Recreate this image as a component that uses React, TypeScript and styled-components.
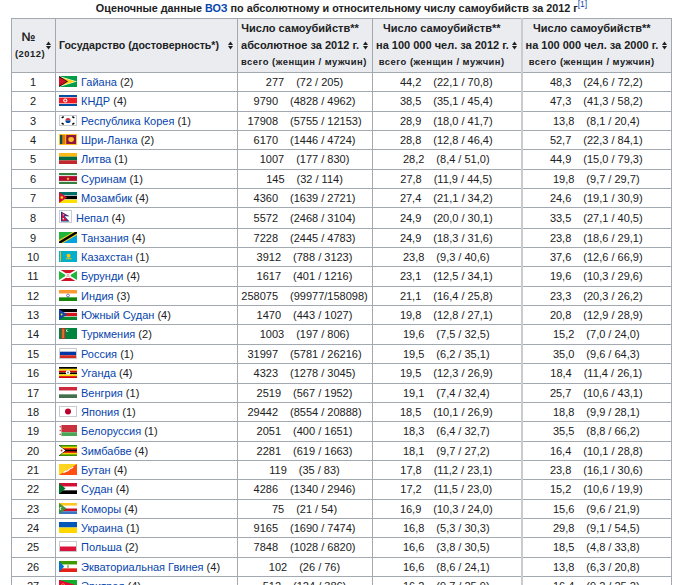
import React from "react";
import styled, { createGlobalStyle } from "styled-components";

const GlobalStyle = createGlobalStyle`
  html, body {
    margin: 0;
    overflow: hidden;
    background: #fff;
  }
  body {
    color: #202122;
    font-family: "Liberation Sans", Arial, sans-serif;
  }
`;

const W = 18;
const H = 11;

// simple flag drawings in an 18x11 box
const flags: Record<string, React.ReactNode> = {
  guyana: (
    <>
      <rect width={W} height={H} fill="#009e49" />
      <polygon points="0,0 18,5.5 0,11" fill="#fff" />
      <polygon points="0,0.7 16.6,5.5 0,10.3" fill="#fcd116" />
      <polygon points="0,0 9,5.5 0,11" fill="#000" />
      <polygon points="0,0.9 8,5.5 0,10.1" fill="#ce1126" />
    </>
  ),
  dprk: (
    <>
      <rect width={W} height={H} fill="#024fa2" />
      <rect y={2} width={W} height={7} fill="#fff" />
      <rect y={2.6} width={W} height={5.8} fill="#ed1c27" />
      <circle cx={6.3} cy={5.5} r={2.1} fill="#fff" />
      <circle cx={6.3} cy={5.5} r={1.1} fill="#ed1c27" />
    </>
  ),
  korea: (
    <>
      <rect width={W} height={H} fill="#fff" />
      <path d="M6.4,5.5 a2.6,2.6 0 0 1 5.2,0 z" fill="#cd2e3a" />
      <path d="M6.4,5.5 a2.6,2.6 0 0 0 5.2,0 z" fill="#0047a0" />
      <rect x={2.5} y={1.5} width={2.4} height={1.6} fill="#000" transform="rotate(-33 3.7 2.3)" />
      <rect x={13.1} y={1.5} width={2.4} height={1.6} fill="#000" transform="rotate(33 14.3 2.3)" />
      <rect x={2.5} y={7.9} width={2.4} height={1.6} fill="#000" transform="rotate(33 3.7 8.7)" />
      <rect x={13.1} y={7.9} width={2.4} height={1.6} fill="#000" transform="rotate(-33 14.3 8.7)" />
    </>
  ),
  srilanka: (
    <>
      <rect width={W} height={H} fill="#ffbe29" />
      <rect x={1} y={1} width={2.6} height={9} fill="#00534e" />
      <rect x={3.6} y={1} width={2.6} height={9} fill="#eb7400" />
      <rect x={7.2} y={1} width={9.8} height={9} fill="#8d153a" />
      <ellipse cx={12.1} cy={5.5} rx={2.8} ry={2.4} fill="#ffbe29" />
    </>
  ),
  lithuania: (
    <>
      <rect width={W} height={3.67} fill="#fdb913" />
      <rect y={3.67} width={W} height={3.67} fill="#006a44" />
      <rect y={7.33} width={W} height={3.67} fill="#c1272d" />
    </>
  ),
  suriname: (
    <>
      <rect width={W} height={H} fill="#377e3f" />
      <rect y={2.2} width={W} height={6.6} fill="#fff" />
      <rect y={3.1} width={W} height={4.8} fill="#b40a2d" />
      <polygon points="9,3.9 9.5,5.2 10.8,5.2 9.7,6 10.1,7.2 9,6.5 7.9,7.2 8.3,6 7.2,5.2 8.5,5.2" fill="#ecc81d" />
    </>
  ),
  mozambique: (
    <>
      <rect width={W} height={3.4} fill="#007168" />
      <rect y={3.4} width={W} height={4.2} fill="#fff" />
      <rect y={3.8} width={W} height={3.4} fill="#000" />
      <rect y={7.6} width={W} height={3.4} fill="#fce100" />
      <polygon points="0,0 8,5.5 0,11" fill="#d21034" />
      <circle cx={2.8} cy={5.5} r={1.3} fill="#fce100" />
    </>
  ),
  tanzania: (
    <>
      <rect width={W} height={H} fill="#00a3dd" />
      <polygon points="0,0 14,0 0,8.6" fill="#1eb53a" />
      <polygon points="0,11 0,8 14,0 18,0 18,3 4,11" fill="#fcd116" />
      <polygon points="0,11 0,9.6 15.8,0 18,0 18,1.4 2.3,11" fill="#000" />
    </>
  ),
  kazakhstan: (
    <>
      <rect width={W} height={H} fill="#00afca" />
      <circle cx={9.5} cy={4.8} r={2} fill="#fec50c" />
      <rect x={6.7} y={7.3} width={6} height={0.9} fill="#fec50c" />
      <rect x={1} y={0.5} width={0.9} height={10} fill="#fec50c" />
    </>
  ),
  burundi: (
    <>
      <rect width={W} height={H} fill="#fff" />
      <polygon points="1.6,0 16.4,0 9,4.5" fill="#ce1126" />
      <polygon points="1.6,11 16.4,11 9,6.5" fill="#ce1126" />
      <polygon points="0,1 0,10 7.3,5.5" fill="#1eb53a" />
      <polygon points="18,1 18,10 10.7,5.5" fill="#1eb53a" />
      <circle cx={9} cy={5.5} r={2.6} fill="#fff" />
      <circle cx={9} cy={4.5} r={0.55} fill="#ce1126" />
      <circle cx={8.1} cy={6.1} r={0.55} fill="#ce1126" />
      <circle cx={9.9} cy={6.1} r={0.55} fill="#ce1126" />
    </>
  ),
  india: (
    <>
      <rect width={W} height={3.67} fill="#ff9933" />
      <rect y={3.67} width={W} height={3.67} fill="#fff" />
      <rect y={7.33} width={W} height={3.67} fill="#138808" />
      <circle cx={9} cy={5.5} r={1.4} fill="none" stroke="#000080" strokeWidth={0.5} />
    </>
  ),
  ssudan: (
    <>
      <rect width={W} height={3.3} fill="#000" />
      <rect y={3.3} width={W} height={4.4} fill="#fff" />
      <rect y={3.9} width={W} height={3.2} fill="#da121a" />
      <rect y={7.7} width={W} height={3.3} fill="#078930" />
      <polygon points="0,0 8,5.5 0,11" fill="#0f47af" />
      <circle cx={2.6} cy={5.5} r={0.9} fill="#fcdd09" />
    </>
  ),
  turkmenistan: (
    <>
      <rect width={W} height={H} fill="#00843d" />
      <rect x={2.4} width={3.6} height={H} fill="#d22630" />
      <rect x={3.2} y={1} width={2} height={9} fill="#f0b323" opacity={0.55} />
      <circle cx={8.6} cy={2.6} r={1.5} fill="#fff" />
      <circle cx={9.3} cy={2.4} r={1.3} fill="#00843d" />
    </>
  ),
  russia: (
    <>
      <rect width={W} height={3.67} fill="#fff" />
      <rect y={3.67} width={W} height={3.67} fill="#0039a6" />
      <rect y={7.33} width={W} height={3.67} fill="#d52b1e" />
    </>
  ),
  uganda: (
    <>
      <rect width={W} height={1.83} fill="#000" />
      <rect y={1.83} width={W} height={1.83} fill="#fcdc04" />
      <rect y={3.67} width={W} height={1.83} fill="#d90000" />
      <rect y={5.5} width={W} height={1.83} fill="#000" />
      <rect y={7.33} width={W} height={1.83} fill="#fcdc04" />
      <rect y={9.17} width={W} height={1.83} fill="#d90000" />
      <circle cx={9} cy={5.5} r={2.3} fill="#fff" />
      <circle cx={9} cy={5.5} r={0.9} fill="#6d6d6d" />
    </>
  ),
  hungary: (
    <>
      <rect width={W} height={3.67} fill="#cd2a3e" />
      <rect y={3.67} width={W} height={3.67} fill="#fff" />
      <rect y={7.33} width={W} height={3.67} fill="#436f4d" />
    </>
  ),
  japan: (
    <>
      <rect width={W} height={H} fill="#fff" />
      <circle cx={9} cy={5.5} r={3} fill="#bc002d" />
    </>
  ),
  belarus: (
    <>
      <rect width={W} height={7.3} fill="#c8313e" />
      <rect y={7.3} width={W} height={3.7} fill="#4aa657" />
      <rect width={2.4} height={H} fill="#fff" />
      <rect x={0.6} y={1} width={1.2} height={1.4} fill="#c8313e" />
      <rect x={0.6} y={4.8} width={1.2} height={1.4} fill="#c8313e" />
      <rect x={0.6} y={8.6} width={1.2} height={1.4} fill="#c8313e" />
    </>
  ),
  zimbabwe: (
    <>
      <rect width={W} height={H} fill="#319208" />
      <rect y={1.57} width={W} height={7.86} fill="#ffd200" />
      <rect y={3.14} width={W} height={4.72} fill="#de2010" />
      <rect y={4.71} width={W} height={1.58} fill="#000" />
      <polygon points="0,0 7,5.5 0,11" fill="#000" />
      <polygon points="0,0.4 6.4,5.5 0,10.6" fill="#fff" />
      <circle cx={2.6} cy={5.5} r={0.9} fill="#de2010" />
    </>
  ),
  bhutan: (
    <>
      <rect width={W} height={H} fill="#ff4e12" />
      <polygon points="0,0 18,0 0,11" fill="#ffd520" />
      <path d="M4,8.5 C6,6 8,7 9,5.5 C10,4 12,4.5 14,2.5 L14.6,3.3 C12.6,5.4 11,5 10,6.4 C9,8 7,7.2 4.8,9.3 Z" fill="#fff" />
    </>
  ),
  sudan: (
    <>
      <rect width={W} height={3.67} fill="#d21034" />
      <rect y={3.67} width={W} height={3.67} fill="#fff" />
      <rect y={7.33} width={W} height={3.67} fill="#000" />
      <polygon points="0,0 6.5,5.5 0,11" fill="#007229" />
    </>
  ),
  comoros: (
    <>
      <rect width={W} height={2.75} fill="#ffc61e" />
      <rect y={2.75} width={W} height={2.75} fill="#fff" />
      <rect y={5.5} width={W} height={2.75} fill="#ce1126" />
      <rect y={8.25} width={W} height={2.75} fill="#3a75c4" />
      <polygon points="0,0 7.5,5.5 0,11" fill="#3d8e33" />
      <circle cx={2.4} cy={5.5} r={1.8} fill="#fff" />
      <circle cx={3.1} cy={5.5} r={1.5} fill="#3d8e33" />
    </>
  ),
  ukraine: (
    <>
      <rect width={W} height={5.5} fill="#0057b7" />
      <rect y={5.5} width={W} height={5.5} fill="#ffd700" />
    </>
  ),
  poland: (
    <>
      <rect width={W} height={5.5} fill="#fff" />
      <rect y={5.5} width={W} height={5.5} fill="#dc143c" />
    </>
  ),
  eqguinea: (
    <>
      <rect width={W} height={3.67} fill="#3e9a00" />
      <rect y={3.67} width={W} height={3.67} fill="#fff" />
      <rect y={7.33} width={W} height={3.67} fill="#e32118" />
      <polygon points="0,0 5.2,5.5 0,11" fill="#0073ce" />
      <rect x={8.2} y={4.2} width={1.6} height={2.6} fill="#3e9a00" opacity={0.7} />
    </>
  ),
  eritrea: (
    <>
      <rect width={W} height={5.5} fill="#12ad2b" />
      <rect y={5.5} width={W} height={5.5} fill="#4189dd" />
      <polygon points="0,0 18,5.5 0,11" fill="#ea0437" />
      <circle cx={4} cy={5.5} r={1.8} fill="none" stroke="#ffc726" strokeWidth={0.6} />
    </>
  ),
};

const bordered = new Set(["korea", "japan", "poland", "russia"]);

type Row = [string, string, number, string, string, string, string, string, string];

const rows: Row[] = [
  ["guyana", "Гайана", 2, "277", "(72 / 205)", "44,2", "(22,1 / 70,8)", "48,3", "(24,6 / 72,2)"],
  ["dprk", "КНДР", 4, "9790", "(4828 / 4962)", "38,5", "(35,1 / 45,4)", "47,3", "(41,3 / 58,2)"],
  ["korea", "Республика Корея", 1, "17908", "(5755 / 12153)", "28,9", "(18,0 / 41,7)", "13,8", "(8,1 / 20,4)"],
  ["srilanka", "Шри-Ланка", 2, "6170", "(1446 / 4724)", "28,8", "(12,8 / 46,4)", "52,7", "(22,3 / 84,1)"],
  ["lithuania", "Литва", 1, "1007", "(177 / 830)", "28,2", "(8,4 / 51,0)", "44,9", "(15,0 / 79,3)"],
  ["suriname", "Суринам", 1, "145", "(32 / 114)", "27,8", "(11,9 / 44,5)", "19,8", "(9,7 / 29,7)"],
  ["mozambique", "Мозамбик", 4, "4360", "(1639 / 2721)", "27,4", "(21,1 / 34,2)", "24,6", "(19,1 / 30,9)"],
  ["nepal", "Непал", 4, "5572", "(2468 / 3104)", "24,9", "(20,0 / 30,1)", "33,5", "(27,1 / 40,5)"],
  ["tanzania", "Танзания", 4, "7228", "(2445 / 4783)", "24,9", "(18,3 / 31,6)", "23,8", "(18,6 / 29,1)"],
  ["kazakhstan", "Казахстан", 1, "3912", "(788 / 3123)", "23,8", "(9,3 / 40,6)", "37,6", "(12,6 / 66,9)"],
  ["burundi", "Бурунди", 4, "1617", "(401 / 1216)", "23,1", "(12,5 / 34,1)", "19,6", "(10,3 / 29,6)"],
  ["india", "Индия", 3, "258075", "(99977/158098)", "21,1", "(16,4 / 25,8)", "23,3", "(20,3 / 26,2)"],
  ["ssudan", "Южный Судан", 4, "1470", "(443 / 1027)", "19,8", "(12,8 / 27,1)", "20,8", "(12,9 / 28,9)"],
  ["turkmenistan", "Туркмения", 2, "1003", "(197 / 806)", "19,6", "(7,5 / 32,5)", "15,2", "(7,0 / 24,0)"],
  ["russia", "Россия", 1, "31997", "(5781 / 26216)", "19,5", "(6,2 / 35,1)", "35,0", "(9,6 / 64,3)"],
  ["uganda", "Уганда", 4, "4323", "(1278 / 3045)", "19,5", "(12,3 / 26,9)", "18,4", "(11,4 / 26,1)"],
  ["hungary", "Венгрия", 1, "2519", "(567 / 1952)", "19,1", "(7,4 / 32,4)", "25,7", "(10,6 / 43,1)"],
  ["japan", "Япония", 1, "29442", "(8554 / 20888)", "18,5", "(10,1 / 26,9)", "18,8", "(9,9 / 28,1)"],
  ["belarus", "Белоруссия", 1, "2051", "(400 / 1651)", "18,3", "(6,4 / 32,7)", "35,5", "(8,8 / 66,2)"],
  ["zimbabwe", "Зимбабве", 4, "2281", "(619 / 1663)", "18,1", "(9,7 / 27,2)", "16,4", "(10,1 / 28,8)"],
  ["bhutan", "Бутан", 4, "119", "(35 / 83)", "17,8", "(11,2 / 23,1)", "23,8", "(16,1 / 30,6)"],
  ["sudan", "Судан", 4, "4286", "(1340 / 2946)", "17,2", "(11,5 / 23,0)", "15,2", "(10,6 / 19,9)"],
  ["comoros", "Коморы", 4, "75", "(21 / 54)", "16,9", "(10,3 / 24,0)", "15,6", "(9,6 / 21,9)"],
  ["ukraine", "Украина", 1, "9165", "(1690 / 7474)", "16,8", "(5,3 / 30,3)", "29,8", "(9,1 / 54,5)"],
  ["poland", "Польша", 2, "7848", "(1028 / 6820)", "16,6", "(3,8 / 30,5)", "18,5", "(4,8 / 33,8)"],
  ["eqguinea", "Экваториальная Гвинея", 4, "102", "(26 / 76)", "16,6", "(8,6 / 24,1)", "13,8", "(6,3 / 20,8)"],
  ["eritrea", "Эритрея", 4, "512", "(124 / 386)", "16,2", "(9,7 / 25,9)", "16,4", "(9,2 / 25,2)"],
];

const Page = styled.div`
  padding: 0 7px 0 11px;
`;

const Table = styled.table`
  width: 660px;
  border-collapse: collapse;
  table-layout: fixed;
  border: 1px solid #a2a9b1;
  background: #fff;
  font-size: 11px;
`;

const Caption = styled.caption`
  font-weight: bold;
  font-size: 10.8px;
  line-height: 15px;
  padding: 1px 0 2px;
  white-space: nowrap;
`;

const Col = styled.col<{ $w: number }>`
  width: ${(p) => p.$w}px;
`;

const Link = styled.a`
  color: #0645ad;
  text-decoration: none;
`;

const Ref = styled.sup`
  font-size: 8.5px;
  line-height: 0;
  color: #0645ad;
  font-weight: normal;
`;

const HeadCell = styled.th<{ $divider?: boolean }>`
  background: #eaecf0;
  border: 1px solid #a2a9b1;
  ${(p) => (p.$divider ? "border-left: 2px solid #c8ccd1;" : "")}
  padding: 1px 4px 2px 3px;
  vertical-align: middle;
  font-weight: bold;
`;

const HeadInner = styled.div`
  display: flex;
  align-items: center;
  gap: 4px;
`;

const HeadText = styled.div<{ $align: "left" | "center"; $size?: number }>`
  flex: 1;
  min-width: 0;
  text-align: ${(p) => p.$align};
  font-size: ${(p) => p.$size ?? 11}px;
  white-space: nowrap;
`;

const Line = styled.div<{ $size?: number }>`
  font-size: ${(p) => p.$size ?? 11}px;
  line-height: 17px;
`;

const Small = styled.div`
  font-size: 9.4px;
  letter-spacing: 0.5px;
  line-height: 16px;
`;

const Cell = styled.td<{ $align: "left" | "center"; $divider?: boolean }>`
  border: 1px solid #a2a9b1;
  ${(p) => (p.$divider ? "border-left: 2px solid #c8ccd1;" : "")}
  padding: 2px 4px 2px 3px;
  line-height: 14.35px;
  text-align: ${(p) => p.$align};
  white-space: nowrap;
  overflow: hidden;
`;

const Split = styled.span`
  margin-left: 12px;
`;

const FlagBox = styled.svg`
  display: inline-block;
  vertical-align: -1px;
  margin-right: 4px;
`;

const SortIcon = () => (
  <svg width="5" height="9" viewBox="0 0 5 9" style={{ flex: "none" }}>
    <polygon points="0,4 2.5,0.5 5,4" fill="#202122" />
    <polygon points="0,5 2.5,8.5 5,5" fill="#202122" />
  </svg>
);

const Flag = ({ id }: { id: string }) => {
  if (id === "nepal") {
    return (
      <FlagBox width={13} height={13} viewBox="0 0 13 13">
        <rect x={0.5} y={0.5} width={12} height={12} fill="#fff" stroke="#c8ccd1" />
        <polygon points="2,1.5 10.5,6.2 5.5,6.2 10.5,11.5 2,11.5" fill="#003893" />
        <polygon points="2.8,2.8 8.3,5.6 4,5.6 8.6,10.8 2.8,10.8" fill="#dc143c" />
        <circle cx={4.3} cy={4.8} r={0.6} fill="#fff" />
        <circle cx={4.3} cy={8.8} r={0.8} fill="#fff" />
      </FlagBox>
    );
  }
  return (
    <FlagBox width={W} height={H} viewBox={`0 0 ${W} ${H}`} preserveAspectRatio="none">
      {flags[id]}
      {bordered.has(id) && (
        <rect x={0.5} y={0.5} width={W - 1} height={H - 1} fill="none" stroke="#c8ccd1" />
      )}
    </FlagBox>
  );
};

const Pair = ({ a, b }: { a: string; b: string }) => (
  <>
    {a}
    <Split>{b}</Split>
  </>
);

const RateHead = ({ top, mid, divider }: { top: string; mid: string; divider?: boolean }) => (
  <HeadCell $divider={divider}>
    <HeadInner>
      <HeadText $align="center">
        <Line>{top}</Line>
        <Line>{mid}</Line>
        <Small>всего (женщин / мужчин)</Small>
      </HeadText>
      <SortIcon />
    </HeadInner>
  </HeadCell>
);

export default function App() {
  return (
    <Page>
      <GlobalStyle />
      <Table>
        <Caption>
          Оценочные данные <Link href="#">ВОЗ</Link> по абсолютному и относительному числу
          самоубийств за 2012 г<Ref>[1]</Ref>
        </Caption>
        <colgroup>
          <Col $w={44} />
          <Col $w={182} />
          <Col $w={135} />
          <Col $w={149} />
          <Col $w={150} />
        </colgroup>
        <thead>
          <tr>
            <HeadCell>
              <HeadInner>
                <HeadText $align="center">
                  <Line $size={12.5}>№</Line>
                  <Small>(2012)</Small>
                </HeadText>
                <SortIcon />
              </HeadInner>
            </HeadCell>
            <HeadCell>
              <HeadInner>
                <HeadText $align="left" $size={10.6}>
                  Государство (достоверность*)
                </HeadText>
                <SortIcon />
              </HeadInner>
            </HeadCell>
            <RateHead top="Число самоубийств**" mid="абсолютное за 2012 г." />
            <RateHead top="Число самоубийств**" mid="на 100 000 чел. за 2012 г." />
            <RateHead top="Число самоубийств**" mid="на 100 000 чел. за 2000 г." divider />
          </tr>
        </thead>
        <tbody>
          {rows.map((r, i) => (
            <tr key={r[0]}>
              <Cell $align="center">{i + 1}</Cell>
              <Cell $align="left">
                <Flag id={r[0]} />
                <Link href="#">{r[1]}</Link> ({r[2]})
              </Cell>
              <Cell $align="center">
                <Pair a={r[3]} b={r[4]} />
              </Cell>
              <Cell $align="center">
                <Pair a={r[5]} b={r[6]} />
              </Cell>
              <Cell $align="center" $divider>
                <Pair a={r[7]} b={r[8]} />
              </Cell>
            </tr>
          ))}
        </tbody>
      </Table>
    </Page>
  );
}
